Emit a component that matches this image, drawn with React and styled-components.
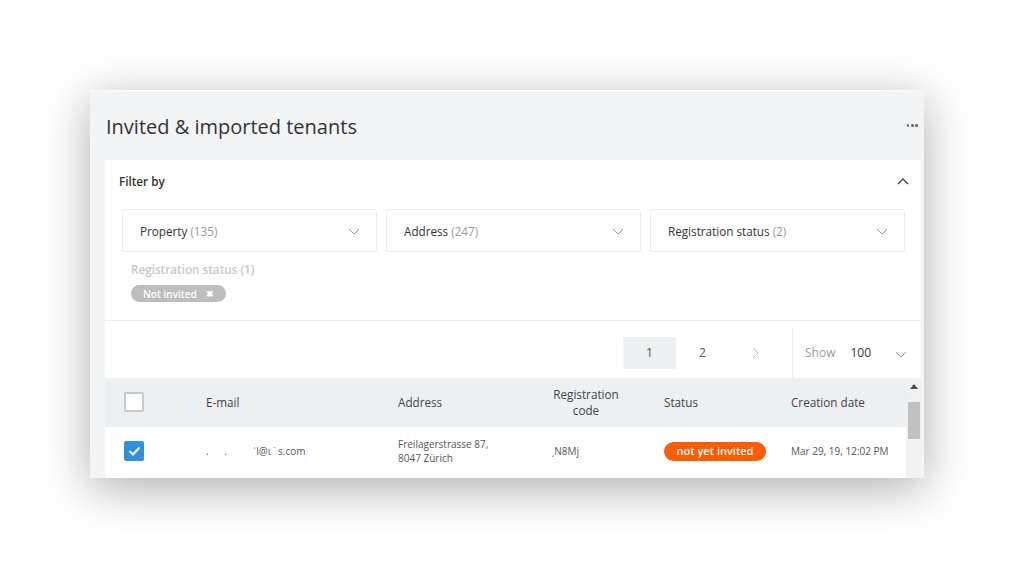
import React from 'react'
import styled, { createGlobalStyle } from 'styled-components'

const GlobalStyle = createGlobalStyle`
  html, body {
    margin: 0;
    padding: 0;
    background: #ffffff;
    font-family: "Open Sans", "Liberation Sans", sans-serif;
    color: #333;
  }
`

const Stage = styled.div`
  padding: 90px 0 0 90px;
  width: 1031px;
  height: 581px;
  box-sizing: border-box;
  overflow: hidden;
`

const Card = styled.div`
  width: 834px;
  height: 388px;
  background: #f3f4f6;
  border-top: 1px solid #fbfbfb;
  box-sizing: border-box;
  overflow: hidden;
  box-shadow: 0 10px 45px rgba(0, 0, 0, 0.32);
  padding: 0 3px 0 15px;
  display: flex;
  flex-direction: column;
`

const CardHeader = styled.div`
  height: 69px;
  flex-shrink: 0;
  display: flex;
  align-items: center;
  justify-content: space-between;
  padding: 1px 3px 0 1px;
  box-sizing: border-box;
`

const Title = styled.h1`
  margin: 0;
  font-size: 20px;
  font-weight: 400;
  color: #333;
  line-height: 27px;
`

const Dots = styled.div`
  display: flex;
  gap: 1.8px;
  margin-top: -1px;

  span {
    width: 2.6px;
    height: 2.6px;
    border-radius: 50%;
    background: #6a6a6a;
  }
`

const Panel = styled.div`
  background: #fff;
  flex: 1;
  display: flex;
  flex-direction: column;
`

const FilterHeader = styled.div`
  height: 42px;
  display: flex;
  align-items: center;
  justify-content: space-between;
  padding: 0 12px 0 14px;
  font-size: 11.7px;
  font-weight: 600;
  color: #333;
`

const FilterBody = styled.div`
  padding: 7px 16px 17px 17px;
  border-bottom: 1px solid #ececec;
`

const SelectRow = styled.div`
  display: grid;
  grid-template-columns: 255px 255px 255px;
  gap: 9px;
`

const SelectBox = styled.div`
  height: 43px;
  box-sizing: border-box;
  border: 1px solid #ebebeb;
  border-radius: 3px;
  display: flex;
  align-items: center;
  justify-content: space-between;
  padding: 1px 16px 0 17px;
  font-size: 11.7px;
  color: #333;

  em {
    font-style: normal;
    color: #999;
  }
`

const AppliedLabel = styled.div`
  margin: 9px 0 0 9px;
  font-size: 11.7px;
  font-weight: 600;
  color: #c8c8c8;
  line-height: 17px;
`

const Chip = styled.span`
  display: inline-flex;
  align-items: center;
  margin: 7px 0 0 9px;
  height: 17px;
  padding: 0 12px;
  border-radius: 9px;
  background: #bdbdbd;
  color: #fff;
  font-size: 10px;
  font-weight: 600;

  b {
    margin-left: 9px;
    font-size: 9px;
  }
`

const PagerRow = styled.div`
  height: 57px;
  flex-shrink: 0;
  display: flex;
  justify-content: flex-end;
`

const Pager = styled.div`
  display: flex;
  padding-top: 16px;
  margin-right: 10px;
`

const PageBtn = styled.div`
  width: 53px;
  height: 32px;
  display: flex;
  align-items: center;
  justify-content: center;
  font-size: 12px;
  color: ${p => (p.$muted ? '#bbb' : '#555')};
  background: ${p => (p.$active ? '#eef0f2' : 'transparent')};
  border-radius: 2px;
`

const ShowBox = styled.div`
  width: 129px;
  margin-top: 7px;
  box-sizing: border-box;
  border-left: 1px solid #ebebeb;
  display: flex;
  align-items: center;
  padding: 0 14px 0 12px;
  font-size: 12px;

  span {
    color: #999;
  }

  strong {
    font-weight: 400;
    color: #333;
    margin-left: 15px;
    flex: 1;
  }

  svg {
    margin-top: 4px;
  }
`

const TableWrap = styled.div`
  display: flex;
  flex: 1;
`

const Table = styled.div`
  flex: 1;
`

const Grid = styled.div`
  display: grid;
  grid-template-columns: 101px 192px 134px 108px 151px 1fr;
  align-items: center;
  height: ${p => p.$h}px;
  background: ${p => p.$bg || '#fff'};
  font-size: ${p => p.$fs || 11.7}px;
  color: ${p => p.$color || '#444'};
`

const Cell = styled.div`
  padding-left: ${p => p.$pl || 0}px;
  text-align: ${p => p.$center ? 'center' : 'left'};
  line-height: ${p => p.$lh || 16}px;
  white-space: pre;
`

const Check = styled.div`
  width: 20px;
  height: 20px;
  box-sizing: border-box;
  border-radius: 2px;
  border: ${p => (p.$on ? 'none' : '2px solid #c9c9c9')};
  background: ${p => (p.$on ? '#2f8fe0' : '#fff')};
  display: flex;
  align-items: center;
  justify-content: center;
`

const Badge = styled.span`
  display: inline-flex;
  align-items: center;
  justify-content: center;
  width: 102px;
  height: 19px;
  border-radius: 10px;
  background: #ff5b00;
  color: #fff;
  font-size: 11px;
  font-weight: 600;
`

const Scrollbar = styled.div`
  width: 15px;
  background: #f1f1f1;
  display: flex;
  flex-direction: column;
  align-items: center;
  padding-top: 6px;
  box-sizing: border-box;
`

const Thumb = styled.div`
  width: 12px;
  height: 37px;
  margin-top: 13px;
  background: #c1c1c1;
`

const Chevron = ({ up, color = '#999', w = 10, sw = 1 }) => (
  <svg width={w + 2} height={w / 2 + 2} viewBox={`-1 -1 ${w + 2} ${w / 2 + 2}`}>
    <polyline
      points={up ? `0,${w / 2} ${w / 2},0 ${w},${w / 2}` : `0,0 ${w / 2},${w / 2} ${w},0`}
      fill="none"
      stroke={color}
      strokeWidth={sw}
    />
  </svg>
)

const filters = [
  { label: 'Property', count: 135 },
  { label: 'Address', count: 247 },
  { label: 'Registration status', count: 2 },
]

export default function App() {
  return (
    <Stage>
      <GlobalStyle />
      <Card>
        <CardHeader>
          <Title>Invited &amp; imported tenants</Title>
          <Dots><span /><span /><span /></Dots>
        </CardHeader>

        <Panel>
          <FilterHeader>
            Filter by
            <Chevron up color="#444" sw={1.4} />
          </FilterHeader>

          <FilterBody>
            <SelectRow>
              {filters.map(f => (
                <SelectBox key={f.label}>
                  <span>{f.label} <em>({f.count})</em></span>
                  <Chevron />
                </SelectBox>
              ))}
            </SelectRow>
            <AppliedLabel>Registration status (1)</AppliedLabel>
            <Chip>Not invited <b>✖</b></Chip>
          </FilterBody>

          <PagerRow>
            <Pager>
              <PageBtn $active>1</PageBtn>
              <PageBtn>2</PageBtn>
              <PageBtn $muted>
                <svg width="7" height="12" viewBox="0 0 7 12">
                  <polyline points="1,1 6,6 1,11" fill="none" stroke="#bbb" strokeWidth="1" />
                </svg>
              </PageBtn>
            </Pager>
            <ShowBox>
              <span>Show</span>
              <strong>100</strong>
              <Chevron />
            </ShowBox>
          </PagerRow>

          <TableWrap>
            <Table>
              <Grid $h={49} $bg="#edf0f2">
                <Cell $pl={19}><Check /></Cell>
                <Cell>E-mail</Cell>
                <Cell>Address</Cell>
                <Cell $center>{'Registration\ncode'}</Cell>
                <Cell $pl={24}>Status</Cell>
                <Cell>Creation date</Cell>
              </Grid>
              <Grid $h={49} $fs={10} $color="#555">
                <Cell $pl={19}>
                  <Check $on>
                    <svg width="13" height="10" viewBox="0 0 13 10">
                      <polyline points="1.5,5 5,8.5 11.5,1.5" fill="none" stroke="#fff" strokeWidth="2" />
                    </svg>
                  </Check>
                </Cell>
                <Cell>{'.      .          \u02C8l@\u03B9 \u02D9 s.com'}</Cell>
                <Cell $lh={14}>{'Freilagerstrasse 87,\n8047 Zürich'}</Cell>
                <Cell $pl={19}>{'\u02CFN8Mj'}</Cell>
                <Cell $pl={24}><Badge>not yet invited</Badge></Cell>
                <Cell>Mar 29, 19, 12:02 PM</Cell>
              </Grid>
            </Table>
            <Scrollbar>
              <svg width="8" height="5" viewBox="0 0 8 5">
                <polygon points="0,5 4,0 8,5" fill="#505050" />
              </svg>
              <Thumb />
            </Scrollbar>
          </TableWrap>
        </Panel>
      </Card>
    </Stage>
  )
}
